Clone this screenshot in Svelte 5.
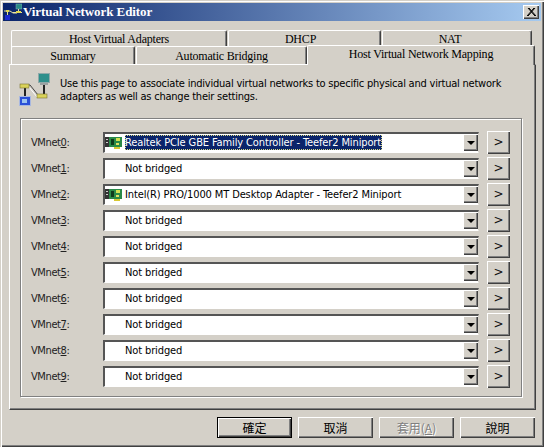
<script>
  const rows = [
    { d: '0', text: 'Realtek PCIe GBE Family Controller - Teefer2 Miniport', nic: true, sel: true },
    { d: '1', text: 'Not bridged' },
    { d: '2', text: 'Intel(R) PRO/1000 MT Desktop Adapter - Teefer2 Miniport', nic: true },
    { d: '3', text: 'Not bridged' },
    { d: '4', text: 'Not bridged' },
    { d: '5', text: 'Not bridged' },
    { d: '6', text: 'Not bridged' },
    { d: '7', text: 'Not bridged' },
    { d: '8', text: 'Not bridged' },
    { d: '9', text: 'Not bridged' }
  ];
</script>

<div class="window">
  <div class="title">
    <svg class="ticon" width="18" height="18" viewBox="0 0 18 18">
      <rect x="12" y="1" width="6" height="5" fill="#2a8a86" stroke="#7fb0b0" stroke-width=".5" />
      <rect x="1" y="12" width="5" height="5" fill="#1a2ad0" />
      <path d="M0 8h6l3 2h4M14.500 6v4M3.500 9v3M9 9.500h9" stroke="#e8e4a0" stroke-width="1" fill="none" />
      <rect x="2" y="7" width="3" height="2" fill="#e0d850" />
      <rect x="12" y="8" width="5" height="2" fill="#e0d850" />
    </svg>
    <span class="ttext">Virtual Network Editor</span>
    <button class="close" aria-label="Close">
      <svg width="9" height="8" viewBox="0 0 9 8"><path d="M1 0l7 8M2 0l7 8M8 0L1 8M7 0L0 8" stroke="#000" stroke-width="1" fill="none" /></svg>
    </button>
  </div>

  <div class="body">
    <div class="tabrow r1">
      <div class="tab w1">Host Virtual Adapters</div>
      <div class="tab w2">DHCP</div>
      <div class="tab w3">NAT</div>
    </div>
    <div class="tabrow r2">
      <div class="tab w4">Summary</div>
      <div class="tab w5">Automatic Bridging</div>
      <div class="tab w6 active">Host Virtual Network Mapping</div>
    </div>

    <div class="panel">
      <div class="intro">
        <svg class="picon" width="36" height="34" viewBox="0 0 36 34">
          <rect x="21.500" y="1.500" width="11" height="9" fill="#2d8f8b" stroke="#8fa8a8" />
          <rect x="23" y="11" width="8" height="2" fill="#9aa0a0" />
          <path d="M27 13v10" stroke="#222" stroke-width="2" />
          <path d="M5 13h8l8 10h9" stroke="#444" stroke-width="1" fill="none" />
          <path d="M5 15h7l8 10" stroke="#fff" stroke-width="1" fill="none" />
          <path d="M8 15v10" stroke="#222" stroke-width="2" />
          <rect x="3" y="12" width="9" height="4" fill="#d9d25a" stroke="#7a7430" stroke-width=".6" />
          <rect x="20" y="22" width="10" height="4" fill="#d9d25a" stroke="#7a7430" stroke-width=".6" />
          <rect x="2.500" y="24.500" width="11" height="9" fill="#2a50d8" stroke="#a8b8e0" />
          <rect x="5" y="27" width="5" height="4" fill="#9cc4f0" />
        </svg>
        <p>Use this page to associate individual virtual networks to specific physical and virtual network adapters as well as change their settings.</p>
      </div>

      <div class="group">
        {#each rows as r}
          <div class="row">
            <span class="label">VMnet<u>{r.d}</u>:</span>
            <div class="combo">
              <span class="nic">
                {#if r.nic}
                  <svg width="17" height="14" viewBox="0 0 17 14">
                    <rect x="0" y="1" width="4" height="10" fill="#333" />
                    <rect x="4" y="1" width="13" height="10" fill="#2a8a48" />
                    <rect x="1" y="3" width="2" height="1" fill="#ccc" />
                    <rect x="1" y="6" width="2" height="1" fill="#ccc" />
                    <rect x="6" y="3" width="3" height="6" fill="#0e3a1c" />
                    <rect x="11" y="2" width="4" height="3" fill="#d0e050" />
                    <rect x="11" y="7" width="3" height="2" fill="#e0e060" />
                    <rect x="9" y="11" width="6" height="2" fill="#d8c830" />
                  </svg>
                {/if}
              </span>
              <span class="value" class:sel={r.sel}>{r.text}</span>
              <span class="arrow"><i></i></span>
            </div>
            <button class="more">&gt;</button>
          </div>
        {/each}
      </div>
    </div>

    <div class="actions">
      <button class="btn def">確定</button>
      <button class="btn">取消</button>
      <button class="btn dis">套用(<u>A</u>)</button>
      <button class="btn">說明</button>
    </div>
  </div>
</div>

<style>
  :global(body) { margin: 0; background: #d4d0c8; }
  .window {
    width: 544px; height: 447px; box-sizing: border-box;
    background: #d4d0c8; padding: 3px;
    box-shadow: inset 1px 1px 0 #d4d0c8, inset 2px 2px 0 #fff, inset -1px -1px 0 #404040, inset -2px -2px 0 #808080;
    font-family: "DejaVu Sans", sans-serif; overflow: hidden;
  }
  .title {
    height: 18px; display: flex; align-items: center;
    background: linear-gradient(90deg, #0a246a, #a6caf0);
    padding: 0 2px 0 1px;
  }
  .ticon { flex: none; margin-right: 1px; }
  .ttext {
    font: bold 13px "Liberation Serif", serif; color: #fff; flex: 1; letter-spacing: -.08px;
  }
  .close {
    width: 16px; height: 14px; padding: 0; display: flex; align-items: center; justify-content: center;
    background: #d4d0c8; border: 0;
    box-shadow: inset 1px 1px 0 #fff, inset -1px -1px 0 #404040, inset -2px -2px 0 #808080;
  }
  .body { padding: 9px 5px 0 6px; }
  .tabrow { display: flex; font: 12px "Liberation Serif", serif; color: #000; letter-spacing: -.2px; }
  .r1 { margin-left: 2px; height: 17px; }
  .r2 { margin-left: 2px; height: 17px; align-items: flex-end; position: relative; }
  .tab {
    box-sizing: border-box; height: 18px; flex: none; text-align: center; line-height: 16px;
    background: #d4d0c8; border-top: 1px solid #fff; border-left: 1px solid #fff;
    border-right: 1px solid #404040; box-shadow: inset -1px 0 0 #808080;
    border-radius: 2px 2px 0 0; margin-right: 1px;
  }
  .r2 .tab { line-height: 18px; }
  .w1 { width: 216px; }
  .w2 { width: 153px; padding-right: 8px; }
  .w3 { width: 150px; padding-right: 14px; }
  .w4 { width: 124px; } .w5 { width: 171px; }
  .w6 { width: 228px; margin-right: 0; }
  .r2 .active { height: 20px; margin-bottom: -1px; margin-left: -1px; line-height: 17px; position: relative; z-index: 1; }
  .panel {
    box-sizing: border-box; width: 527px; height: 346px; padding: 0 0 0 10px;
    border-top: 1px solid #fff; border-left: 1px solid #fff;
    border-right: 1px solid #404040; border-bottom: 1px solid #404040;
    box-shadow: inset -1px -1px 0 #808080;
  }
  .intro { display: flex; height: 53px; }
  .picon { flex: none; margin: 7px 0 0 -3px; }
  .intro p {
    margin: 12px 0 0 7px; width: 470px;
    font: 11px/13px "DejaVu Sans", sans-serif; font-stretch: condensed; color: #000;
    letter-spacing: -.22px;
  }
  .group {
    box-sizing: border-box; width: 502px; height: 279px;
    border: 1px solid #808080; box-shadow: 1px 1px 0 #fff, inset 1px 1px 0 #fff;
    padding: 10px 10px 0 10px;
  }
  .row { display: flex; align-items: center; height: 26px; }
  .label { width: 72px; flex: none; font: 11px "DejaVu Sans", sans-serif; font-stretch: condensed; color: #222; letter-spacing: -.4px; }
  .combo {
    box-sizing: border-box; width: 376px; height: 21px; display: flex; align-items: center; flex: none;
    background: #fff; border-top: 2px solid #555; border-left: 2px solid #555;
    border-right: 1px solid #d4d0c8; border-bottom: 1px solid #fff;
    box-shadow: 0 1px 0 #d4d0c8;
    font: 11px "DejaVu Sans", sans-serif; font-stretch: condensed; color: #000; letter-spacing: -.12px;
  }
  .nic { width: 20px; flex: none; height: 14px; padding-left: 0; }
  .nic svg { display: block; }
  .value { flex: 1; min-width: 0; white-space: nowrap; line-height: 15px; }
  .sel { flex: none; background: #0a246a; color: #fff; outline: 1px dotted #d8d880; outline-offset: -1px; padding-right: 1px; }
  .sel + .arrow { margin-left: auto; }
  .arrow {
    width: 15px; height: 17px; flex: none; display: flex; align-items: center; justify-content: center;
    background: #d4d0c8; box-sizing: border-box;
    box-shadow: inset 1px 1px 0 #fff, inset -1px -1px 0 #404040, inset -2px -2px 0 #808080;
  }
  .arrow i { width: 0; height: 0; border: 4px solid transparent; border-top: 4px solid #000; border-bottom: 0; }
  .more {
    width: 23px; height: 23px; margin-left: 8px; padding: 0; flex: none;
    background: #d4d0c8; border: 0; font: 12px "DejaVu Sans", sans-serif; color: #111;
    box-shadow: inset 1px 1px 0 #fff, inset -1px -1px 0 #404040, inset -2px -2px 0 #808080;
  }
  .actions { display: flex; justify-content: flex-end; gap: 6px; margin: 7px 0 0 0; width: 526px; }
  .btn {
    width: 75px; height: 21px; padding: 0; border: 0; background: #d4d0c8;
    font: 12px "Noto Sans CJK TC", sans-serif; color: #000;
    box-shadow: inset 1px 1px 0 #fff, inset -1px -1px 0 #404040, inset -2px -2px 0 #808080;
  }
  .def {
    border: 1px solid #000;
    box-shadow: inset 1px 1px 0 #fff, inset -1px -1px 0 #404040, inset -2px -2px 0 #808080;
  }
  .dis { color: #808080; text-shadow: 1px 1px 0 #fff; }
</style>
